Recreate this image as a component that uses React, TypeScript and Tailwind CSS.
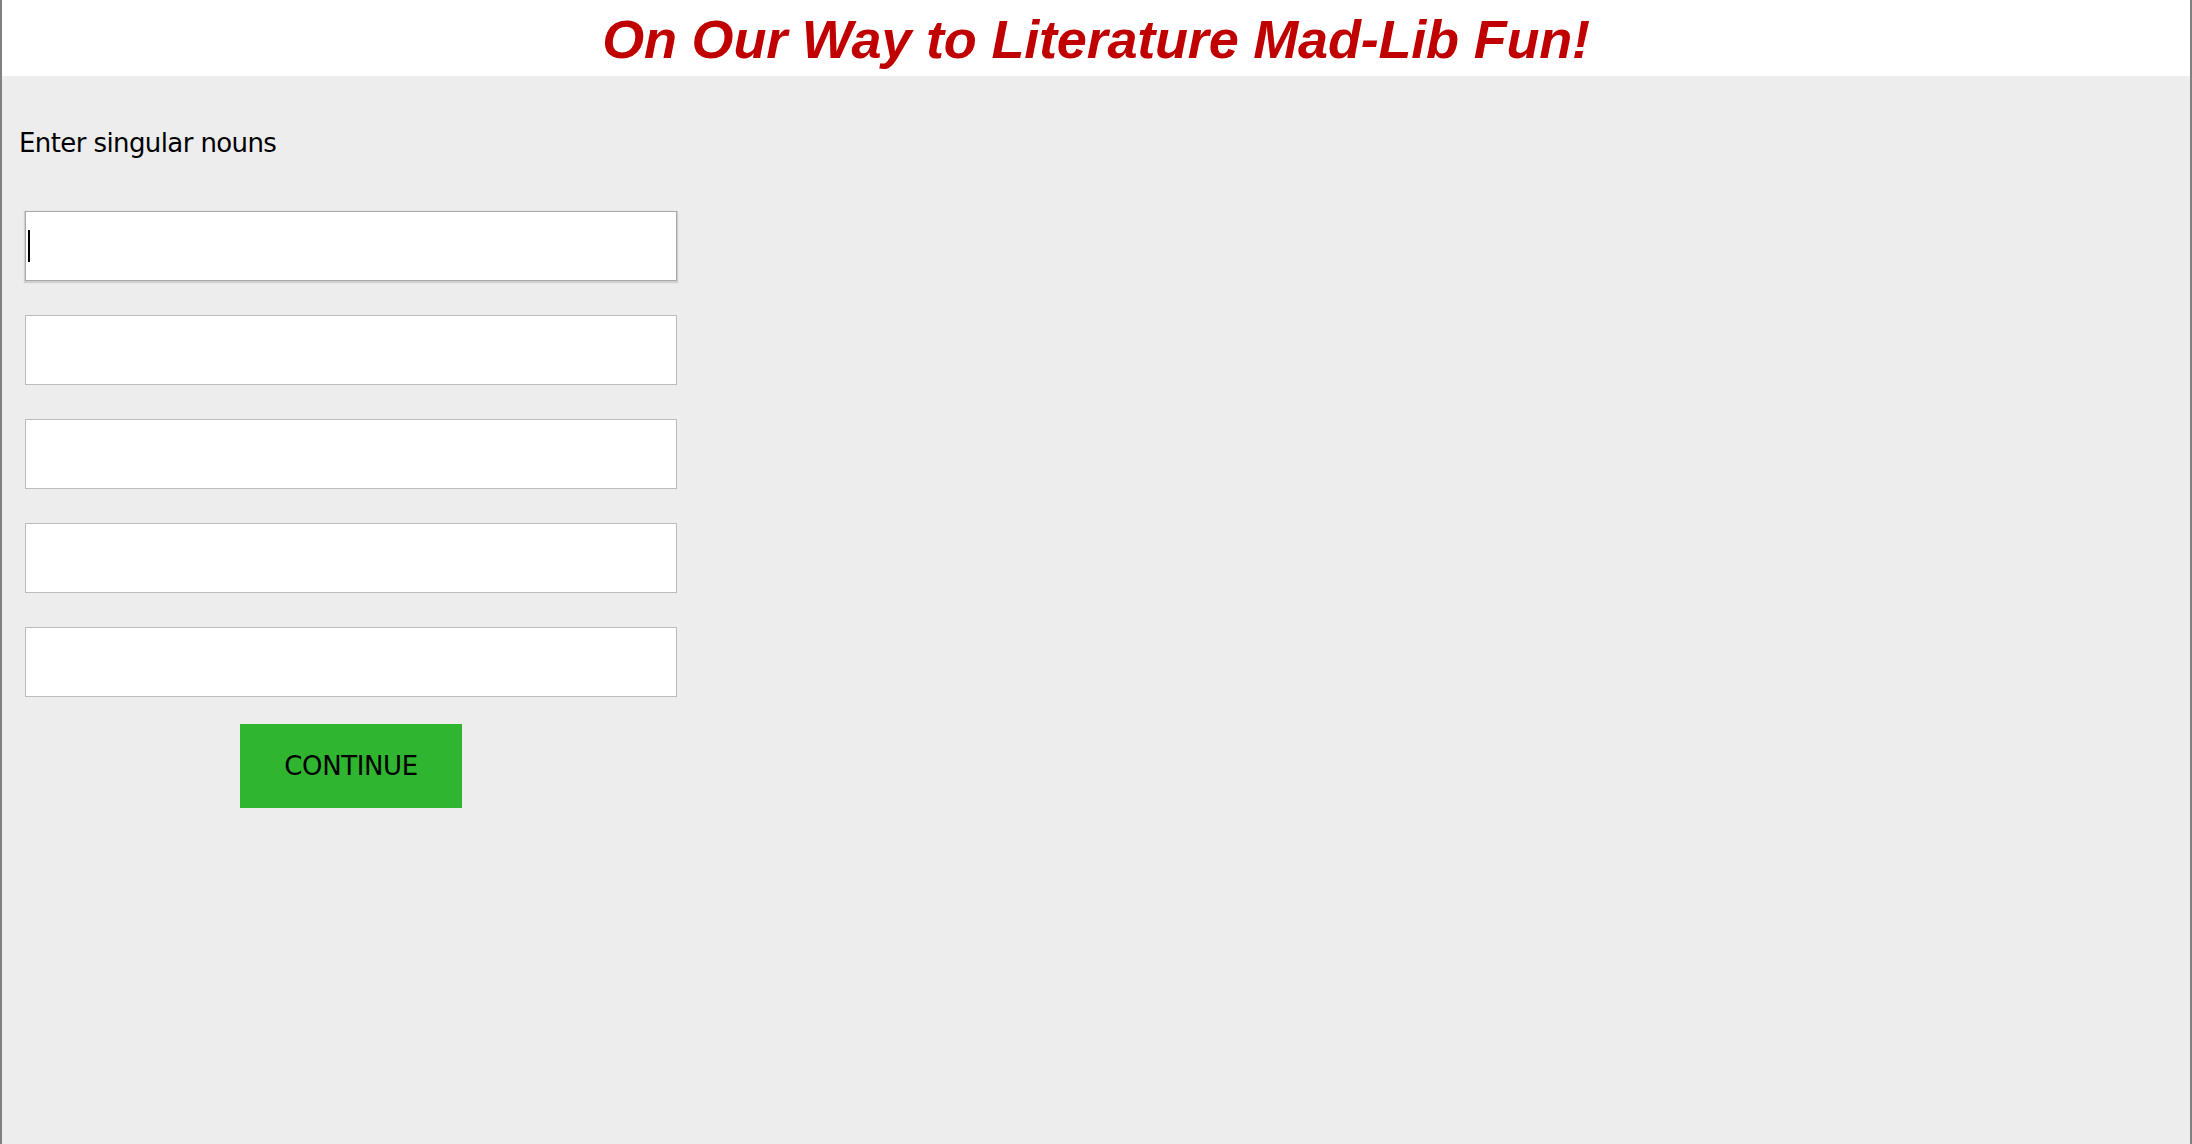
import React from 'react';

const fields = [0, 1, 2, 3, 4];

const App: React.FC = () => {
  const [nouns, setNouns] = React.useState<string[]>(['', '', '', '', '']);

  const update = (i: number, v: string) => {
    const next = [...nouns];
    next[i] = v;
    setNouns(next);
  };

  return (
    <div className="h-[1144px] flex flex-col bg-[#ededed] border-x-2 border-[#808080] overflow-hidden">
      <header className="h-[76px] shrink-0 bg-white flex justify-center pt-[12px]">
        <h1 className="font-['Liberation_Sans',Arial,sans-serif] font-bold italic text-[54px] leading-none tracking-[-0.2px] text-[#c00000]">
          On Our Way to Literature Mad-Lib Fun!
        </h1>
      </header>

      <main className="flex flex-col pl-[17px] font-['DejaVu_Sans',sans-serif] text-black">
        <p className="mt-[54px] text-[26px] leading-none tracking-[-0.6px]">Enter singular nouns</p>

        <div className="mt-[55px] ml-[6px] w-[652px] flex flex-col items-center">
          <div className="w-full flex flex-col gap-[34px]">
            {fields.map((i) => (
              <div key={i} className="relative">
                <input
                  type="text"
                  value={nouns[i]}
                  onChange={(e) => update(i, e.target.value)}
                  className={
                    i === 0
                      ? 'block w-full h-[70px] bg-white border border-[#a8a8a8] shadow-[0_1px_1px_1px_#d0d0d0] px-[4px] text-[26px] outline-none'
                      : 'block w-full h-[70px] bg-white border border-[#bcbcbc] px-[4px] text-[26px] outline-none'
                  }
                />
                {i === 0 && (
                  <span className="absolute left-[3px] top-[19px] w-[2px] h-[32px] bg-black pointer-events-none" />
                )}
              </div>
            ))}
          </div>

          <button
            type="button"
            className="mt-[27px] w-[222px] h-[84px] bg-[#2fb52f] text-[26px] leading-none tracking-[-0.4px] text-black"
          >
            CONTINUE
          </button>
        </div>
      </main>
    </div>
  );
};

export default App;
